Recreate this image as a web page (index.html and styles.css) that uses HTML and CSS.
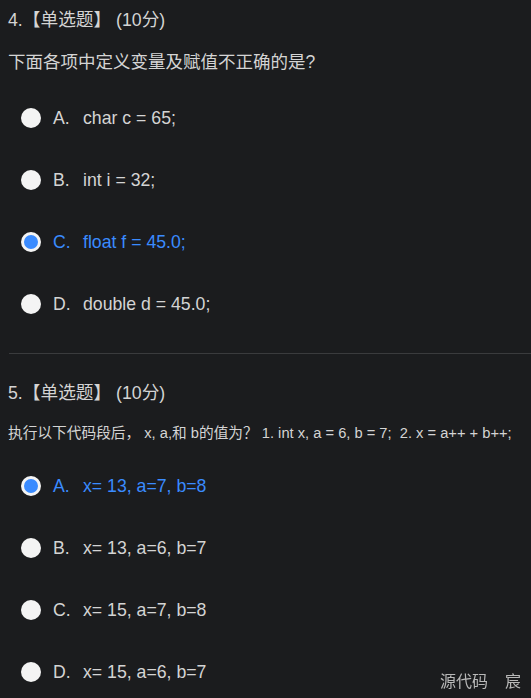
FILE: index.html
```html
<!DOCTYPE html>
<html lang="zh">
<head>
<meta charset="utf-8">
<link rel="stylesheet" href="styles.css">
</head>
<body>
<div class="question">
  <div class="q-title">4.【单选题】 (10分)</div>
  <div class="q-text">下面各项中定义变量及赋值不正确的是?</div>
  <div class="options">
    <div class="option"><span class="radio"></span><span class="label">A.</span><span class="content">char c = 65;</span></div>
    <div class="option"><span class="radio"></span><span class="label">B.</span><span class="content">int i = 32;</span></div>
    <div class="option selected"><span class="radio"></span><span class="label">C.</span><span class="content">float f = 45.0;</span></div>
    <div class="option"><span class="radio"></span><span class="label">D.</span><span class="content">double d = 45.0;</span></div>
  </div>
</div>
<div class="divider"></div>
<div class="question q2">
  <div class="q-title">5.【单选题】 (10分)</div>
  <div class="q-text small">执行以下代码段后， x, a,和 b的值为？ 1. int x, a = 6, b = 7;&nbsp; 2. x = a++ + b++;</div>
  <div class="options">
    <div class="option selected"><span class="radio"></span><span class="label">A.</span><span class="content">x= 13, a=7, b=8</span></div>
    <div class="option"><span class="radio"></span><span class="label">B.</span><span class="content">x= 13, a=6, b=7</span></div>
    <div class="option"><span class="radio"></span><span class="label">C.</span><span class="content">x= 15, a=7, b=8</span></div>
    <div class="option"><span class="radio"></span><span class="label">D.</span><span class="content">x= 15, a=6, b=7</span></div>
  </div>
</div>
<div class="watermark"><span>源代码</span><span>宸</span></div>
</body>
</html>
```
FILE: styles.css
```css
html, body {
  margin: 0;
  padding: 0;
  background: #1b1c1e;
}
body {
  color: #d4d4d4;
  font-family: "Liberation Sans", Arial, "Noto Sans CJK SC", sans-serif;
  font-size: 17.7px;
  height: 698px;
  overflow: hidden;
}
.question {
  padding: 8px 8px 0 8px;
}
.q-title {
  line-height: 24px;
  height: 24px;
}
.q-text {
  margin-top: 18px;
  line-height: 24px;
  height: 24px;
  white-space: nowrap;
  font-size: 17.5px;
}
.q-text.small {
  font-size: 14.7px;
  margin-top: 16px;
}
.options {
  margin-top: 13px;
  display: flex;
  flex-direction: column;
}
.q2 .options {
  margin-top: 10px;
}
.option {
  height: 62px;
  display: flex;
  align-items: center;
}
.radio {
  width: 20px;
  height: 20px;
  border-radius: 50%;
  background: #f4f4f4;
  margin-left: 13px;
  box-sizing: border-box;
}
.option.selected .radio {
  background: #3a8bff;
  border: 3px solid #f4f4f4;
}
.label {
  margin-left: 12px;
  width: 30px;
}
.option.selected {
  color: #3a8bff;
}
.divider {
  margin: 18px 0 0 9px;
  height: 1px;
  background: #3a3b3d;
}
.q2 {
  padding-top: 27px;
}
.watermark {
  position: fixed;
  right: 10px;
  bottom: 8px;
  font-size: 16px;
  color: #b8b8b8;
  font-family: "Noto Sans CJK SC", sans-serif;
  line-height: 20px;
  display: flex;
  gap: 17px;
}
```
